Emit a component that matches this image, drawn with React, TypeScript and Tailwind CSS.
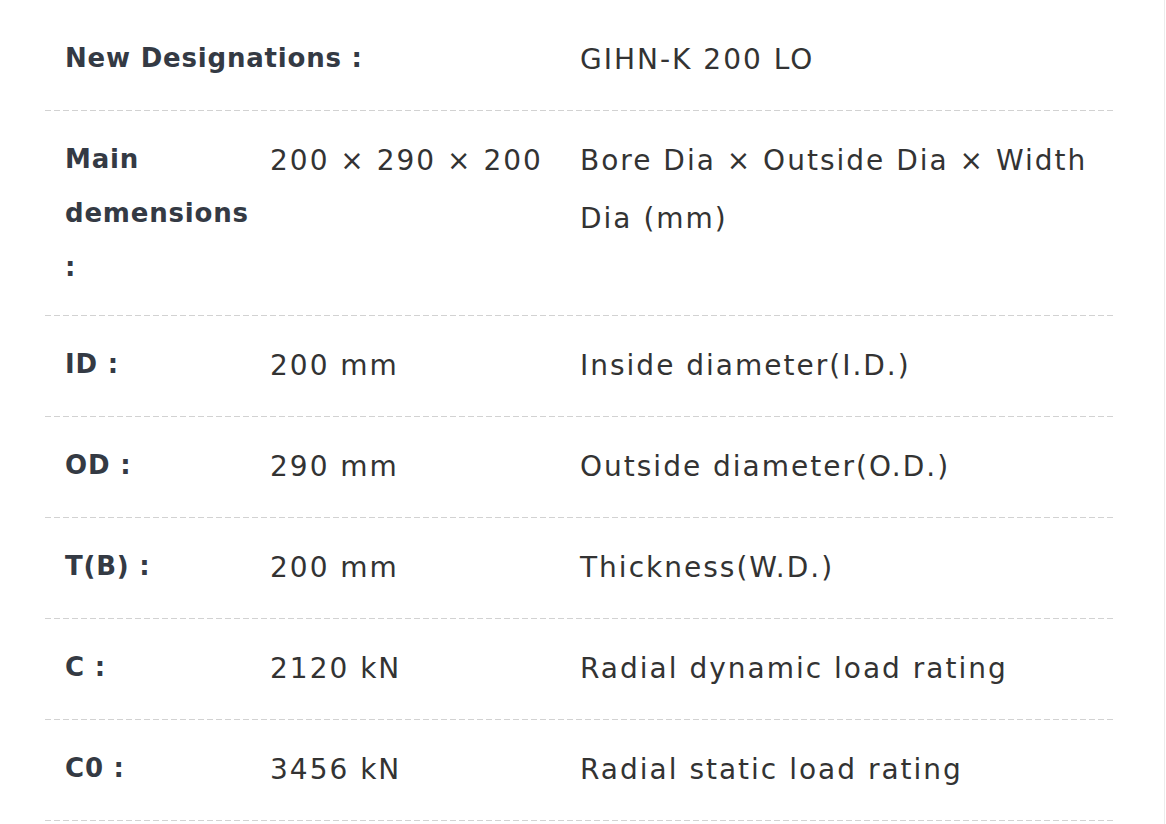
import React from "react";

type Row = {
  label: React.ReactNode;
  value?: React.ReactNode;
  desc: React.ReactNode;
};

const rows: Row[] = [
  { label: "ID :", value: "200 mm", desc: "Inside diameter(I.D.)" },
  { label: "OD :", value: "290 mm", desc: "Outside diameter(O.D.)" },
  { label: "T(B) :", value: "200 mm", desc: "Thickness(W.D.)" },
  { label: "C :", value: "2120 kN", desc: "Radial dynamic load rating" },
  { label: "C0 :", value: "3456 kN", desc: "Radial static load rating" },
];

const dashed =
  "bg-[repeating-linear-gradient(to_right,#d2d2d2_0_6px,transparent_6px_9px)] bg-bottom bg-no-repeat bg-[length:100%_1px]";

const labelCls =
  "pl-5 py-[21px] text-[26px] leading-[54px] font-semibold tracking-[0.8px] text-[#343a44] whitespace-nowrap";
const valueCls =
  "pl-5 py-[21px] text-[28px] leading-[58px] tracking-[2px] text-[#333] whitespace-nowrap";

export default function App() {
  return (
    <div
      className="min-h-screen w-[1165px] border-r border-[#ececec] bg-white pt-[10px]"
      style={{ fontFamily: '"DejaVu Sans", "Noto Sans", sans-serif' }}
    >
      <div className="ml-[45px] w-[1068px]">
        {/* designation row */}
        <div className={`grid grid-cols-[205px_310px_1fr] pb-px ${dashed}`}>
          <div className={`${labelCls} col-span-2`}>New Designations :</div>
          <div className={valueCls}>GIHN-K 200 LO</div>
        </div>

        {/* main dimensions */}
        <div className={`grid grid-cols-[205px_310px_1fr] pb-px ${dashed}`}>
          <div className={labelCls}>
            Main
            <br />
            demensions
            <br />:
          </div>
          <div className={valueCls}>200 × 290 × 200</div>
          <div className={valueCls}>
            Bore Dia × Outside Dia × Width
            <br />
            Dia (mm)
          </div>
        </div>

        {rows.map((r, i) => (
          <div key={i} className={`grid grid-cols-[205px_310px_1fr] pb-px ${dashed}`}>
            <div className={labelCls}>{r.label}</div>
            <div className={valueCls}>{r.value}</div>
            <div className={valueCls}>{r.desc}</div>
          </div>
        ))}
      </div>
    </div>
  );
}
